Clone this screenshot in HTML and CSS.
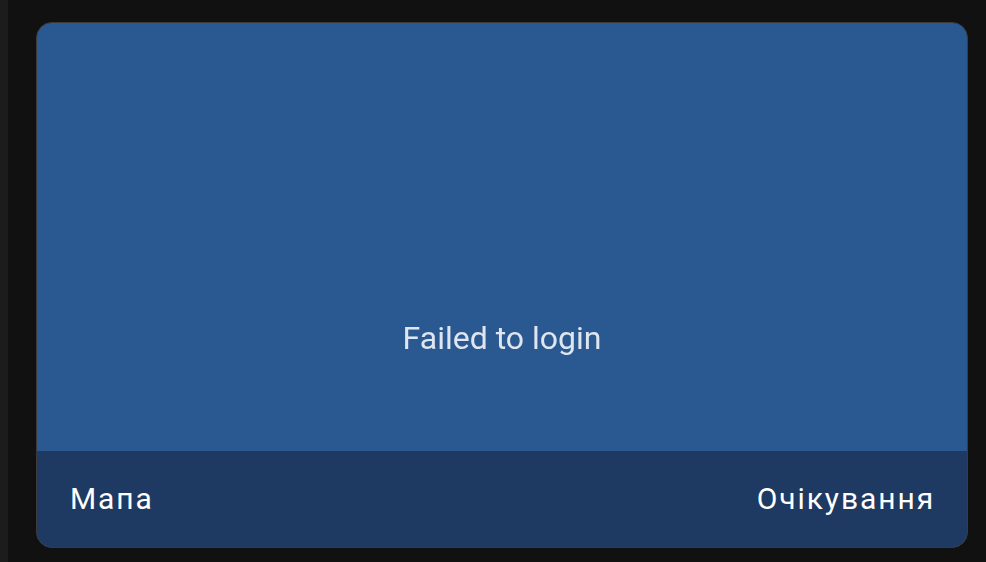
FILE: index.html
```html
<!DOCTYPE html>
<html lang="uk">
<head>
    <meta charset="utf-8">
    <title>Мапа</title>
    <link rel="stylesheet" href="styles.css">
</head>
<body>
    <div class="rail"></div>
    <div class="content">
        <div class="card">
            <div class="card-image">
                <div class="status">Failed to login</div>
            </div>
            <div class="card-footer">
                <span class="name">Мапа</span>
                <span class="state">Очікування</span>
            </div>
        </div>
    </div>
</body>
</html>
```

FILE: styles.css
```css
html,
body {
    height: 100%;
}

body {
    margin: 0;
    display: flex;
    background: #111111;
    font-family: Roboto, "Noto Sans", sans-serif;
}

.rail {
    width: 8px;
    background: #1c1c1c;
}

.content {
    flex: 1;
    padding: 22px 18px 14px 28px;
}

.card {
    height: 100%;
    box-sizing: border-box;
    display: flex;
    flex-direction: column;
    border: 1px solid #3b3b3b;
    border-radius: 16px;
    overflow: hidden;
    background: #2a5891;
}

.card-image {
    flex: 1;
    display: flex;
    justify-content: center;
    padding-top: 295px;
}

.status {
    color: #dfe6ef;
    font-size: 32px;
    line-height: 40px;
    height: 40px;
    filter: blur(0.5px);
}

.card-footer {
    height: 96px;
    display: flex;
    align-items: center;
    justify-content: space-between;
    padding: 0 33px 0 33px;
    background: #1e3a63;
    color: #ffffff;
    font-size: 30px;
    letter-spacing: 1.9px;
}

.card-footer span {
    margin-top: -2px;
}

.state {
    margin-right: -1px;
}
```
